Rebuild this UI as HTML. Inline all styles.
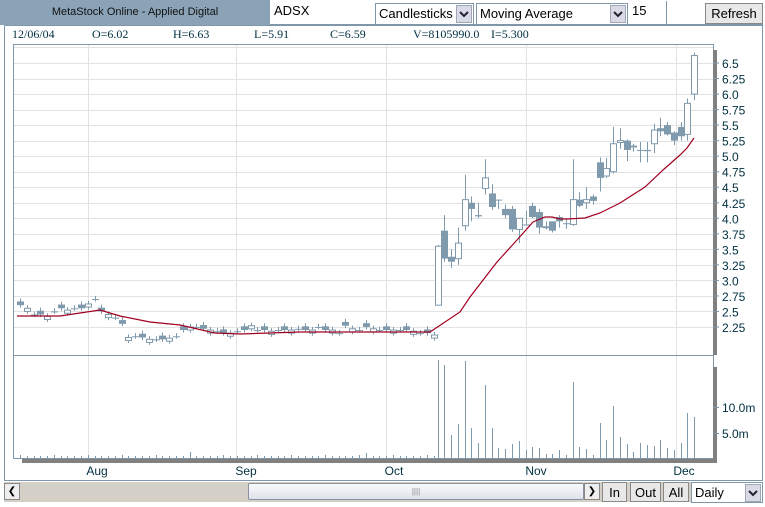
<!DOCTYPE html>
<html><head><meta charset="utf-8"><style>
*{margin:0;padding:0;box-sizing:border-box}
body{width:765px;height:506px;background:#fff;position:relative;overflow:hidden;font-family:"Liberation Sans",sans-serif;font-size:12px;color:#000}
.a{position:absolute}
.hdr{left:0;top:0;width:270px;height:25px;background:#8aa3b6;color:#111;font-size:11px;text-align:center;line-height:25px}
.inp{background:#fff;height:22px;top:2px;font-size:13px;line-height:20px;padding-left:3px}
.sel{background:#fff;border:1px solid #7f97a8;height:22px;top:3px;font-size:13px;line-height:20px;padding-left:3px}
.dd{position:absolute;right:1px;top:1px;width:16px;height:18px;background:#d8dbe6;border:1px solid #a0a8b8}
.btn{background:#e8e8e8;border:1px solid #888;text-align:center;font-size:13px;line-height:19px}
.info{top:27px;font-family:"Liberation Serif",serif;font-size:12px;color:#003040}
</style></head><body>
<div class="a hdr">MetaStock Online - Applied Digital</div>
<div class="a inp" style="left:271px;top:1px;width:102px;height:24px">ADSX</div>
<div class="a sel" style="left:375px;width:99px">Candlesticks<div class="dd"><svg width="14" height="16"><path d="M3 6 L7 10 L11 6" stroke="#223" stroke-width="2" fill="none"/></svg></div></div>
<div class="a sel" style="left:476px;width:152px">Moving Average<div class="dd"><svg width="14" height="16"><path d="M3 6 L7 10 L11 6" stroke="#223" stroke-width="2" fill="none"/></svg></div></div>
<div class="a inp" style="left:629px;top:1px;width:38px;height:24px;border-right:1px solid #7f97a8">15</div>
<div class="a btn" style="left:705px;top:3px;width:58px;height:21px">Refresh</div>
<div class="a" style="left:4px;top:25px;width:759px;height:456px;border:1px solid #7f97a8;background:#fff"></div>
<div class="a" style="left:270px;top:24px;width:493px;height:1px;background:#7f97a8"></div>
<div class="a info" style="left:12px">12/06/04</div>
<div class="a info" style="left:92px">O=6.02</div>
<div class="a info" style="left:173px">H=6.63</div>
<div class="a info" style="left:254px">L=5.91</div>
<div class="a info" style="left:330px">C=6.59</div>
<div class="a info" style="left:413px">V=8105990.0</div>
<div class="a info" style="left:491px">I=5.300</div>
<svg class="a" style="left:0;top:0" width="765" height="506" id="s"></svg>
<div class="a" style="left:4px;top:482px;width:759px;height:20px;background:#d4d0c8"></div>
<div class="a btn" style="left:4px;top:483px;width:16px;height:17px;font-size:10px;line-height:15px;background:#eee">&#10094;</div>
<div class="a" style="left:248px;top:483px;width:336px;height:17px;border:1px solid #8a90a0;border-radius:2px;background:linear-gradient(#fafbfd,#dde1ea);text-align:center;font-size:8px;color:#888;line-height:15px">||||</div>
<div class="a btn" style="left:584px;top:483px;width:16px;height:17px;font-size:10px;line-height:15px;background:#eee">&#10095;</div>
<div class="a btn" style="left:602px;top:482px;width:25px;height:20px">In</div>
<div class="a btn" style="left:630px;top:482px;width:31px;height:20px">Out</div>
<div class="a btn" style="left:663px;top:482px;width:26px;height:20px">All</div>
<div class="a sel" style="left:691px;top:482px;width:72px;height:21px">Daily<div class="dd"><svg width="14" height="16"><path d="M3 6 L7 10 L11 6" stroke="#223" stroke-width="2" fill="none"/></svg></div></div>
<script>
var s=document.getElementById('s'),h='';
function L(x1,y1,x2,y2,c,w){h+='<line x1="'+x1+'" y1="'+y1+'" x2="'+x2+'" y2="'+y2+'" stroke="'+c+'" stroke-width="'+(w||1)+'"/>';}
function R(x,y,w,hh,f,st){h+='<rect x="'+x+'" y="'+y+'" width="'+w+'" height="'+hh+'" fill="'+f+'" stroke="'+(st||'none')+'"/>';}
function T(x,y,t,a){h+='<text x="'+x+'" y="'+y+'" font-family="Liberation Sans,sans-serif" font-size="12" fill="#003040"'+(a?' text-anchor="middle"':'')+'>'+t+'</text>';}
function Y(p){return 63+(6.5-p)*62.1;}
for(var k=0;k<=17;k++){var y=Math.round(63+k*15.53)+.5;L(13,y,713,y,'#e2e2e2');}
L(13,47.5,713,47.5,'#e2e2e2');
[88,236,386,526,676].forEach(function(x){L(x+.5,45,x+.5,458,'#e2e2e2');});
h+='<rect x="13.5" y="44.5" width="700" height="414" fill="none" stroke="#7f97a8"/>';
L(13,355.5,713,355.5,'#7f97a8');
R(713,50,4,305,'#808080');R(713,367,4,95,'#808080');
R(22,459,695,4,'#808080');
var lab=['6.5','6.25','6.0','5.75','5.5','5.25','5.0','4.75','4.5','4.25','4.0','3.75','3.5','3.25','3.0','2.75','2.5','2.25'];
lab.forEach(function(t,k){var y=63+k*15.53;L(713,y,719,y,'#7f97a8');T(722,y+5,t);});
L(713,407.5,719,407.5,'#7f97a8');T(722,412,'10.0m');L(713,433.5,719,433.5,'#7f97a8');T(722,438,'5.0m');
[['Aug',97],['Sep',246],['Oct',394],['Nov',536],['Dec',684]].forEach(function(m){T(m[1],475,m[0],1);});
var C='#7f9aad';
function candle(x,o,c,hi,lo){x=Math.round(x);L(x+.5,Y(hi),x+.5,Y(lo),C);var t=Y(Math.max(o,c)),b=Y(Math.min(o,c));if(b-t<1){L(x-3,t+.5,x+4,t+.5,C);return;}
if(c>=o)h+='<rect x="'+(x-2.5)+'" y="'+t+'" width="6" height="'+(b-t)+'" fill="#fff" stroke="'+C+'"/>';else R(x-3,t,7,b-t,C);}
var ec=[2.6,2.55,2.45,2.45,2.42,2.5,2.55,2.52,2.55,2.55,2.62,2.7,2.5,2.45,2.4,2.3,2.08,2.1,2.08,2.05,2.05,2.05,2.07,2.1,2.2,2.25,2.25,2.22,2.2,2.18,2.15,2.15,2.18,2.2,2.27,2.2,2.2,2.18,2.2,2.2,2.2,2.22,2.2,2.2,2.25,2.2,2.2,2.15,2.27,2.22,2.2,2.25,2.22,2.2,2.2,2.2,2.2,2.2,2.18,2.15,2.15,2.12];
for(var i=0;i<ec.length;i++){var x=20+i*6.78,c=ec[i],o=(i%3==0)?c+0.06:(i%3==1?c-0.05:c);candle(x,o,c,Math.max(o,c)+0.05,Math.min(o,c)-0.04);}
var lc=[[438,2.6,3.55,3.57,2.6],[444,3.8,3.35,4.05,3.3],[451,3.38,3.3,3.5,3.2],[458,3.35,3.6,3.85,3.25],[465,3.88,4.3,4.7,3.8],[471,4.25,4.15,4.35,3.95],[478,4.05,4.03,4.25,4.0],[485,4.48,4.65,4.95,4.38],[492,4.4,4.18,4.55,4.13],[498,4.3,4.3,4.3,4.15],[505,4.15,4.05,4.22,4.0],[512,4.15,3.82,4.2,3.78],[519,3.82,4.0,4.0,3.6],[526,3.9,3.9,4.12,3.9],[532,4.2,4.02,4.25,4.0],[539,4.1,3.85,4.15,3.75],[546,3.87,3.84,3.95,3.82],[552,3.95,3.8,3.95,3.77],[559,4.02,3.95,4.05,3.85],[566,3.92,3.92,4.0,3.83],[573,3.9,4.3,4.95,3.88],[579,4.3,4.2,4.42,4.18],[586,4.25,4.3,4.5,4.15],[593,4.35,4.28,4.38,4.22],[600,4.9,4.65,4.98,4.43],[606,4.68,4.8,4.97,4.65],[613,4.75,5.2,5.47,4.72],[620,5.22,5.25,5.45,5.12],[627,5.25,5.1,5.27,4.92],[633,5.17,5.14,5.2,5.07],[640,5.1,5.1,5.23,4.9],[647,5.1,5.08,5.23,4.9],[654,5.2,5.42,5.52,5.05],[660,5.45,5.4,5.62,5.32],[667,5.5,5.35,5.55,5.33],[674,5.38,5.25,5.4,5.18],[681,5.47,5.32,5.55,5.25],[687,5.35,5.85,5.93,5.25],[694,6.0,6.62,6.67,5.9]];
lc.forEach(function(d){candle(d[0],d[1],d[2],d[3],d[4]);});
var ma=[[17,316],[60,316],[80,313],[100,310],[120,316],[150,322],[180,325],[215,333],[240,334],[300,332],[430,332],[445,322],[460,312],[470,297],[497,262],[517,240],[533,222],[545,217],[552,217],[560,219],[567,219],[585,218],[600,213],[620,203],[645,187],[663,170],[680,155],[687,148],[694,138]];
h+='<polyline fill="none" stroke="#a00020" stroke-width="1.2" points="'+ma.map(function(p){return p.join(',')}).join(' ')+'"/>';
for(var i=0;i<ec.length;i++){var x=Math.round(20+i*6.78)+.5;L(x,458,x,456-(i%5==0?1:0)-(i==51||i==25?3:0),C);}
var vt=[360,365,435,424,361,428,443,385,428,448,449,444,441,450,447,448,454,454,450,455,382,447,449,455,423,440,406,437,444,452,443,445,446,440,448,450,443,413,417];
lc.forEach(function(d,i){L(d[0]+.5,458,d[0]+.5,vt[i],C);});
s.innerHTML=h;
</script>
</body></html>
